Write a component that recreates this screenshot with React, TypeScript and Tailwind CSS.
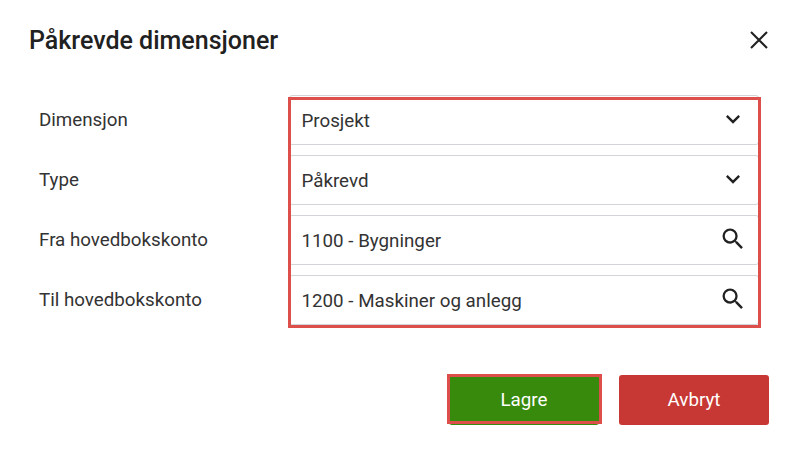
import type { ReactNode } from "react";
import { MdExpandMore, MdSearch } from "react-icons/md";

type Field = {
  label: string;
  value: string;
  icon: "select" | "search";
};

const fields: Field[] = [
  { label: "Dimensjon", value: "Prosjekt", icon: "select" },
  { label: "Type", value: "Påkrevd", icon: "select" },
  { label: "Fra hovedbokskonto", value: "1100 - Bygninger", icon: "search" },
  { label: "Til hovedbokskonto", value: "1200 - Maskiner og anlegg", icon: "search" },
];

const CloseIcon = () => (
  <svg viewBox="0 0 20 20" className="h-5 w-5" fill="none" stroke="currentColor" strokeWidth="2.1">
    <path d="M2 2l16 16M18 2L2 18" />
  </svg>
);

const FieldBox = ({ value, icon }: { value: string; icon: Field["icon"] }) => {
  return (
    <div className="flex h-[50px] items-center justify-between rounded-[3px] border border-[#d3d4d8] pr-[11px] pl-[11.5px]">
      <span className="pt-[2px] text-[18.75px] leading-6">{value}</span>
      {icon === "select" ? (
        <MdExpandMore className="mb-0.5 h-[28px] w-[28px] text-[#212121]" />
      ) : (
        <MdSearch className="mb-[3px] h-[28px] w-[28px] text-[#212121]" />
      )}
    </div>
  );
};

// red frame drawn on top of whatever it wraps
const Highlight = ({ className }: { className: string }) => (
  <div className={`pointer-events-none absolute border-[3px] border-[#dc4f4b] ${className}`} />
);

const Button = ({ className, children }: { className: string; children: ReactNode }) => {
  return (
    <button
      className={`flex h-[50px] w-[150px] items-center justify-center rounded-[3px] text-[18.75px] text-white ${className}`}
    >
      {children}
    </button>
  );
};

export default function App() {
  return (
    <div className="h-[450px] w-[795px] overflow-hidden bg-white font-['Roboto',sans-serif] text-[#212121]">
      <header className="flex h-20 items-center justify-between pr-[26px] pl-[29px]">
        <h2 className="pt-[2px] text-[25px] font-medium">Påkrevde dimensjoner</h2>
        <button aria-label="Lukk">
          <CloseIcon />
        </button>
      </header>

      <main className="flex pt-[15px] pl-[39px] text-[#333]">
        <div className="flex w-[250px] flex-col gap-[10px]">
          {fields.map((field) => (
            <label key={field.label} className="flex h-[50px] items-center text-[18.75px] leading-6">
              {field.label}
            </label>
          ))}
        </div>
        <div className="relative flex w-[470px] flex-col gap-[10px]">
          {fields.map((field) => (
            <FieldBox key={field.label} value={field.value} icon={field.icon} />
          ))}
          <Highlight className="top-0.5 -right-0.5 -bottom-[3px] -left-px" />
        </div>
      </main>

      <footer className="mt-[50px] flex justify-end gap-[20px] pr-[26px]">
        <div className="relative">
          <Button className="bg-[#388a0c]">Lagre</Button>
          <Highlight className="-top-px -right-[3px] bottom-px -left-0.5" />
        </div>
        <Button className="bg-[#c73834]">Avbryt</Button>
      </footer>
    </div>
  );
}
